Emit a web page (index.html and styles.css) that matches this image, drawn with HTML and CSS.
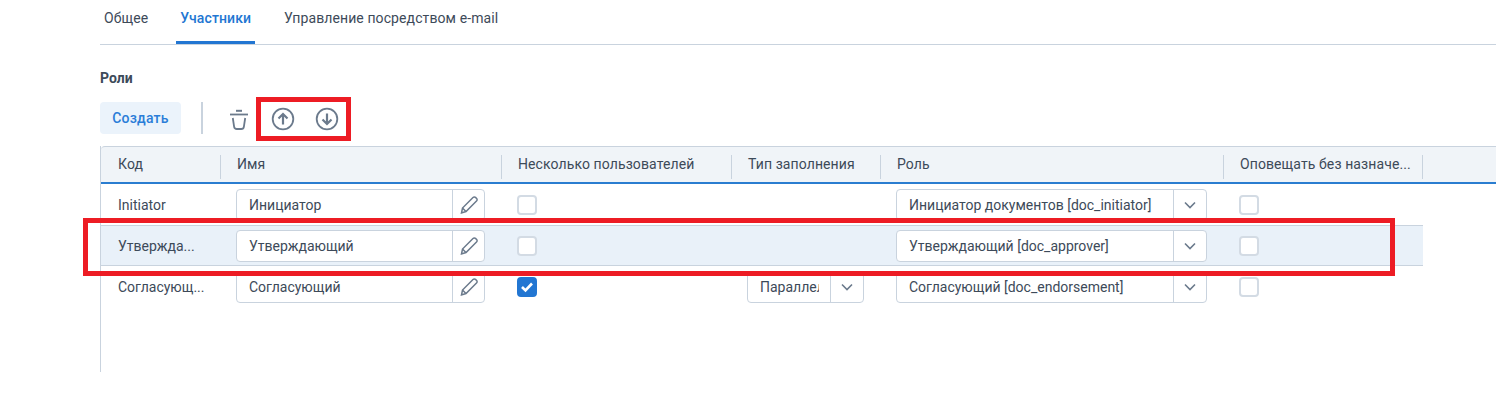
FILE: index.html
```html
<!DOCTYPE html>
<html lang="ru">
<head>
    <meta charset="UTF-8">
    <title>Участники</title>
    <link rel="stylesheet" href="styles.css">
</head>
<body>
    <div class="tabs">
        <div class="tab">Общее</div>
        <div class="tab active">Участники</div>
        <div class="tab">Управление посредством e-mail</div>
    </div>

    <div class="section-title">Роли</div>

    <div class="toolbar">
        <button class="btn-create">Создать</button>
        <div class="tool-sep"></div>
        <svg class="tool-trash" width="20" height="22" viewBox="0 0 20 22" fill="none" stroke="#6b7a8c" stroke-width="1.8">
            <path d="M1 5.500h18"/>
            <path d="M7 1.800h6" stroke-width="2"/>
            <path d="M3.800 9l1.300 8.600c.2 1.500 1.200 2.400 2.700 2.400h4.400c1.500 0 2.500-.9 2.700-2.400L16.200 9"/>
        </svg>
        <svg class="tool-arrow" width="24" height="24" viewBox="0 0 24 24" fill="none" stroke="#6b7a8c" stroke-width="1.800">
            <circle cx="12" cy="12" r="10.300"/>
            <path d="M12 17.500V7M7.500 11.500L12 7l4.500 4.500" stroke-width="2.200"/>
        </svg>
        <svg class="tool-arrow" width="24" height="24" viewBox="0 0 24 24" fill="none" stroke="#6b7a8c" stroke-width="1.800">
            <circle cx="12" cy="12" r="10.300"/>
            <path d="M12 6.500V17M7.500 12.500L12 17l4.500-4.500" stroke-width="2.200"/>
        </svg>
    </div>

    <div class="grid">
        <div class="grid-head">
            <div class="head-row">
                <div class="th">Код</div>
                <div class="th">Имя</div>
                <div class="th">Несколько пользователей</div>
                <div class="th">Тип заполнения</div>
                <div class="th">Роль</div>
                <div class="th">Оповещать без назначе...</div>
            </div>
        </div>

        <div class="row">
            <div class="td code">Initiator</div>
            <div class="td">
                <div class="field name"><span class="val">Инициатор</span><span class="side"><svg width="20" height="20" viewBox="0 0 20 20" fill="none" stroke="#6b7a8c" stroke-width="1.500"><path d="M2.500 18l1-5L14 2.500c.8-.8 1.800-.8 2.500-.1l1.100 1.100c.7.700.7 1.700-.1 2.500L7 16.500z"/><path d="M3.500 13L7 16.500"/></svg></span></div>
            </div>
            <div class="td"><span class="check"></span></div>
            <div class="td"></div>
            <div class="td">
                <div class="field role"><span class="val">Инициатор документов [doc_initiator]</span><span class="side"><svg width="12" height="8" viewBox="0 0 12 8" fill="none" stroke="#6b7a8c" stroke-width="1.600"><path d="M1 1.500l5 5 5-5"/></svg></span></div>
            </div>
            <div class="td"><span class="check"></span></div>
        </div>

        <div class="row selected">
            <div class="td code">Утвержда...</div>
            <div class="td">
                <div class="field name"><span class="val">Утверждающий</span><span class="side"><svg width="20" height="20" viewBox="0 0 20 20" fill="none" stroke="#6b7a8c" stroke-width="1.500"><path d="M2.500 18l1-5L14 2.500c.8-.8 1.800-.8 2.500-.1l1.100 1.100c.7.700.7 1.700-.1 2.500L7 16.500z"/><path d="M3.500 13L7 16.500"/></svg></span></div>
            </div>
            <div class="td"><span class="check"></span></div>
            <div class="td"></div>
            <div class="td">
                <div class="field role"><span class="val">Утверждающий [doc_approver]</span><span class="side"><svg width="12" height="8" viewBox="0 0 12 8" fill="none" stroke="#6b7a8c" stroke-width="1.600"><path d="M1 1.500l5 5 5-5"/></svg></span></div>
            </div>
            <div class="td"><span class="check"></span></div>
        </div>

        <div class="row">
            <div class="td code">Согласующ...</div>
            <div class="td">
                <div class="field name"><span class="val">Согласующий</span><span class="side"><svg width="20" height="20" viewBox="0 0 20 20" fill="none" stroke="#6b7a8c" stroke-width="1.500"><path d="M2.500 18l1-5L14 2.500c.8-.8 1.800-.8 2.500-.1l1.100 1.100c.7.700.7 1.700-.1 2.500L7 16.500z"/><path d="M3.500 13L7 16.500"/></svg></span></div>
            </div>
            <div class="td">
                <span class="check on"><svg width="14" height="12" viewBox="0 0 14 12" fill="none" stroke="#fff" stroke-width="2.600"><path d="M2 6l3.500 3.500L12 2.500"/></svg></span>
            </div>
            <div class="td">
                <div class="field type"><span class="val">Параллельно</span><span class="side"><svg width="12" height="8" viewBox="0 0 12 8" fill="none" stroke="#6b7a8c" stroke-width="1.600"><path d="M1 1.500l5 5 5-5"/></svg></span></div>
            </div>
            <div class="td">
                <div class="field role"><span class="val">Согласующий [doc_endorsement]</span><span class="side"><svg width="12" height="8" viewBox="0 0 12 8" fill="none" stroke="#6b7a8c" stroke-width="1.600"><path d="M1 1.500l5 5 5-5"/></svg></span></div>
            </div>
            <div class="td"><span class="check"></span></div>
        </div>
    </div>

    <!-- красные рамки поверх скриншота -->
    <div class="mark mark-arrows"></div>
    <div class="mark mark-row"></div>
</body>
</html>
```

FILE: styles.css
```css
* {
    box-sizing: border-box;
}

html,
body {
    height: 417px;
    overflow: hidden;
}

body {
    position: relative;
    margin: 0;
    background: #fff;
    font-family: Roboto, "Liberation Sans", sans-serif;
    font-size: 14px;
    color: #3d4a59;
}

.tabs {
    display: flex;
    height: 45px;
    margin-left: 100px;
    border-bottom: 1px solid #c9d3de;
    letter-spacing: .1px;
}

.tab {
    height: 44px;
    padding: 10px 5px 0;
    margin-right: 23px;
    line-height: 16px;
    white-space: nowrap;
}

.tab:first-child {
    padding-left: 4px;
}

.tab.active {
    padding-left: 4px;
    padding-right: 4px;
    margin-right: 24px;
    border-bottom: 3px solid #2276d2;
    border-radius: 2px 2px 0 0;
    color: #2276d2;
    font-weight: 500;
}

.section-title {
    margin: 25px 0 0 100px;
    line-height: 16px;
    font-size: 14px;
    font-weight: 700;
}

.toolbar {
    display: flex;
    align-items: center;
    height: 32px;
    margin: 16px 0 0 100px;
}

.btn-create {
    width: 81px;
    height: 32px;
    padding: 0;
    border: 0;
    border-radius: 4px;
    background: #ebf3fb;
    color: #2a7dd8;
    font-family: inherit;
    font-size: 14px;
    font-weight: 500;
    letter-spacing: .2px;
}

.tool-sep {
    width: 2px;
    height: 32px;
    margin-left: 20px;
    background: #c9d3de;
}

.tool-trash {
    margin: 3px 0 0 26px;
}

.tool-arrow {
    margin: 2px 0 0 20px;
}

.tool-trash + .tool-arrow {
    margin-left: 22px;
}

.grid {
    height: 226px;
    margin: 12px 0 0 100px;
    border-left: 1px solid #c9d3de;
}

.grid-head {
    height: 38px;
    border-top: 1px solid #c9d3de;
    border-bottom: 2px solid #2a7dd0;
    border-top-left-radius: 4px;
    background: #f0f4f8;
    letter-spacing: .1px;
}

.head-row,
.row {
    display: grid;
    grid-template-columns: 120px 281px 230px 149px 343px 199px;
    width: 1322px;
}

.th {
    height: 24px;
    margin-top: 8px;
    padding-left: 16px;
    border-right: 1px solid #c9d3de;
    line-height: 18px;
    white-space: nowrap;
}

.th:first-child {
    padding-left: 17px;
}

.row {
    height: 41px;
    border-top: 1px solid transparent;
    border-bottom: 1px solid transparent;
}

.row.selected {
    border-color: #c9d3de;
    background: #e9f1f9;
}

.td {
    display: flex;
    align-items: center;
    padding-left: 15px;
}

.td.code {
    padding-left: 17px;
}

.field {
    display: flex;
    height: 32px;
    border: 1px solid #c9d3de;
    border-radius: 4px;
    background: #fff;
    line-height: 30px;
}

.field .val {
    flex: 1;
    overflow: hidden;
    padding-left: 12px;
    white-space: nowrap;
}

.field .side {
    display: flex;
    align-items: center;
    justify-content: center;
    width: 33px;
    border-left: 1px solid #c9d3de;
}

.field.name {
    width: 249px;
}

.field.name .side {
    width: 32px;
}

.field.role {
    width: 311px;
}

.field.type {
    width: 117px;
}

.field.type .val {
    margin-right: 11px;
}

.check {
    display: flex;
    align-items: center;
    justify-content: center;
    width: 20px;
    height: 20px;
    border: 2px solid #d3dbe4;
    border-radius: 4px;
    background: #fff;
}

.check.on {
    border-color: #2276d2;
    background: #2276d2;
}

.mark {
    position: absolute;
    border: 5px solid #ed1c24;
}

.mark-arrows {
    left: 256px;
    top: 97px;
    width: 95px;
    height: 44px;
}

.mark-row {
    left: 83px;
    top: 218px;
    width: 1312px;
    height: 58px;
}
```
